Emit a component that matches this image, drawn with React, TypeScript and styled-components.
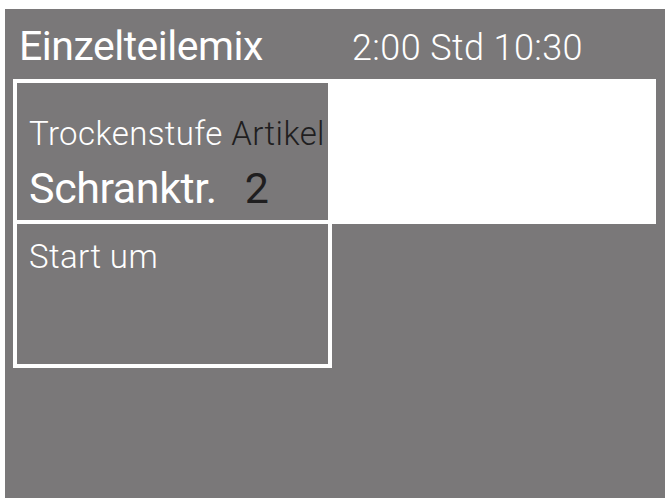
import React from "react";
import styled, { createGlobalStyle } from "styled-components";

const GlobalStyle = createGlobalStyle`
  html, body {
    margin: 0;
    padding: 0;
    background: #ffffff;
  }
  body {
    font-family: Roboto, "Liberation Sans", sans-serif;
  }
`;

const Page = styled.div`
  width: 668px;
  height: 501px;
  padding: 9px 3px 3px 5px;
  box-sizing: border-box;
`;

const Screen = styled.div`
  width: 660px;
  height: 489px;
  background: #7a7879;
  display: flex;
  flex-direction: column;
  padding: 0 9px 0 8px;
  box-sizing: border-box;
`;

const Header = styled.div`
  height: 70px;
  display: flex;
  align-items: flex-start;
  color: #ffffff;
`;

const Title = styled.div`
  font-size: 41px;
  font-weight: 400;
  line-height: 1;
  margin: 17px 0 0 6px;
  width: 333px;
  letter-spacing: -0.5px;
`;

const Clock = styled.div`
  font-size: 36px;
  font-weight: 300;
  line-height: 1;
  margin-top: 21px;
  letter-spacing: 0.4px;
`;

const TopRow = styled.div`
  background: #ffffff;
  height: 145px;
  padding: 4px;
  box-sizing: border-box;
  display: flex;
`;

const Cell = styled.div<{ $width: number }>`
  width: ${(p) => p.$width}px;
  background: #7a7879;
  box-sizing: border-box;
  padding-left: 12px;
`;

const BottomCell = styled.div`
  width: 319px;
  height: 144px;
  border: 4px solid #ffffff;
  border-top: 0;
  box-sizing: border-box;
  background: #7a7879;
  padding-left: 12px;
`;

const Label = styled.div<{ $top: number }>`
  font-size: 33px;
  font-weight: 300;
  line-height: 1;
  color: #ffffff;
  padding-top: ${(p) => p.$top}px;
  letter-spacing: 0.4px;
  white-space: nowrap;
`;

const Value = styled.div`
  font-size: 43px;
  font-weight: 400;
  line-height: 1;
  color: #ffffff;
  margin-top: 17px;
  letter-spacing: -0.4px;
  white-space: nowrap;
`;

const Dark = styled.span<{ $gap?: number }>`
  color: #1f1e1f;
  margin-left: ${(p) => p.$gap ?? 0}px;
`;

export default function App() {
  return (
    <>
      <GlobalStyle />
      <Page>
        <Screen>
          <Header>
            <Title>Einzelteilemix</Title>
            <Clock>2:00 Std 10:30</Clock>
          </Header>
          <TopRow>
            <Cell $width={311}>
              <Label $top={34}>
                Trockenstufe <Dark>Artikel</Dark>
              </Label>
              <Value>
                Schranktr.<Dark $gap={28}>2</Dark>
              </Value>
            </Cell>
          </TopRow>
          <BottomCell>
            <Label $top={16}>Start um</Label>
          </BottomCell>
        </Screen>
      </Page>
    </>
  );
}
